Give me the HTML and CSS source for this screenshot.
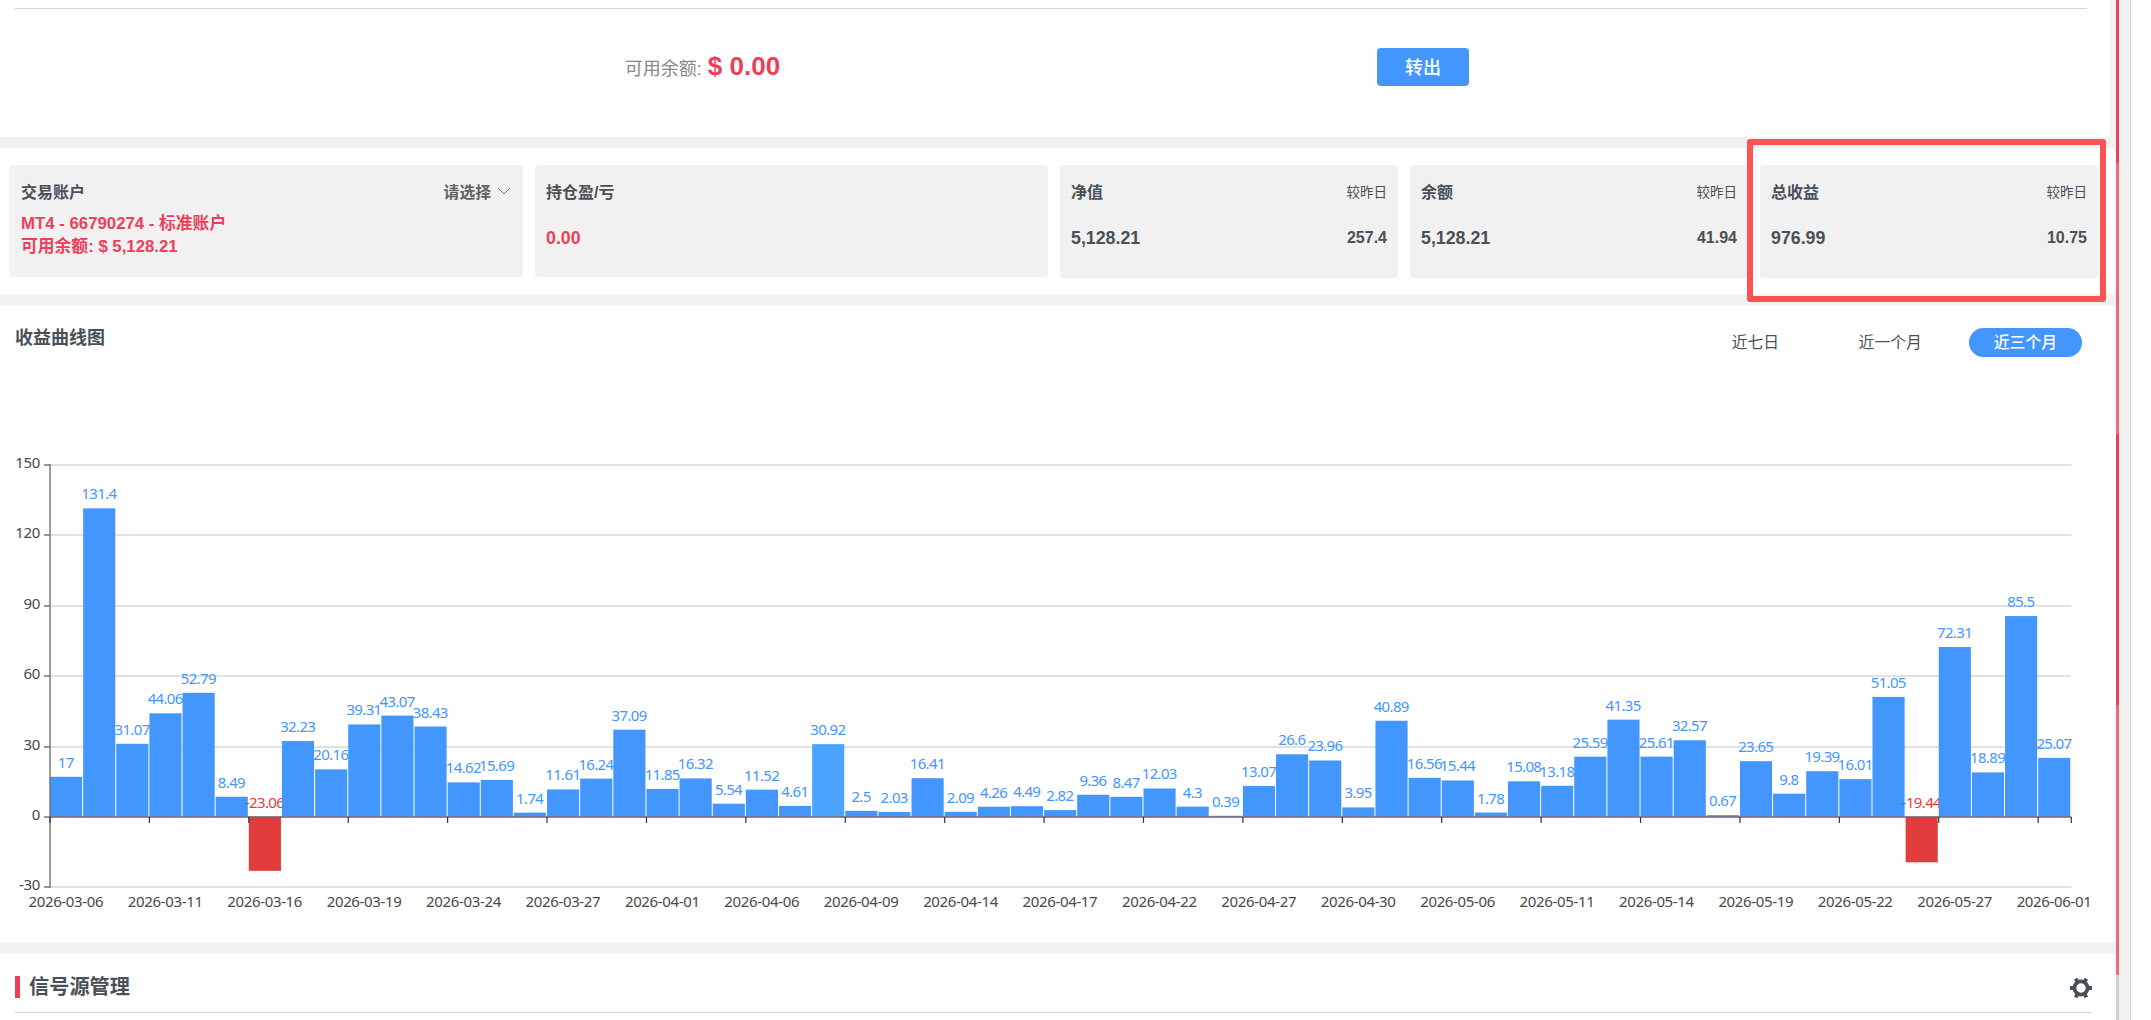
FILE: index.html
```html
<!DOCTYPE html>
<html lang="zh">
<head>
    <meta charset="UTF-8">
    <meta name="viewport" content="width=device-width, initial-scale=1.0">
    <title>收益曲线图</title>
    <link rel="stylesheet" href="styles.css">
</head>
<body>
    <div class="page">
        <main class="content">
            <section class="panel balance">
                <div class="balance-row">
                    <div class="balance-col">
                        <span class="balance-label">可用余额:</span>
                        <span class="balance-value">$ 0.00</span>
                    </div>
                    <div class="balance-col">
                        <button class="btn">转出</button>
                    </div>
                </div>
            </section>

            <section class="panel cards">
                <div class="card account">
                    <div class="card-head">
                        <h4>交易账户</h4>
                        <span class="select">请选择
                            <svg class="chevron" viewBox="0 0 14 8"><path d="M1 1l6 6 6-6"/></svg>
                        </span>
                    </div>
                    <p class="account-info">MT4 - 66790274 - 标准账户<br>可用余额: $ 5,128.21</p>
                </div>
                <div class="card position">
                    <div class="card-head"><h4>持仓盈/亏</h4></div>
                    <div class="card-body"><span class="value red">0.00</span></div>
                </div>
                <div class="card stat">
                    <div class="card-head"><h4>净值</h4><span class="compare">较昨日</span></div>
                    <div class="card-body"><span class="value">5,128.21</span><span class="diff">257.4</span></div>
                </div>
                <div class="card stat">
                    <div class="card-head"><h4>余额</h4><span class="compare">较昨日</span></div>
                    <div class="card-body"><span class="value">5,128.21</span><span class="diff">41.94</span></div>
                </div>
                <div class="card stat marked">
                    <div class="card-head"><h4>总收益</h4><span class="compare">较昨日</span></div>
                    <div class="card-body"><span class="value">976.99</span><span class="diff">10.75</span></div>
                </div>
            </section>

            <section class="panel profit">
                <div class="profit-head">
                    <h3>收益曲线图</h3>
                    <div class="tabs">
                        <span class="tab">近七日</span>
                        <span class="tab">近一个月</span>
                        <span class="tab active">近三个月</span>
                    </div>
                </div>
                <svg class="chart" id="chart" width="2116" height="500" viewBox="0 0 2116 500"></svg>
            </section>

            <section class="panel signal">
                <div class="signal-head">
                    <h2>信号源管理</h2>
                    <svg class="gear" viewBox="-11 -11 22 22">
                        <circle r="6.6"/>
                        <path d="M7 0H11M-7 0H-11M3.5 6.1L5.4 9.4M-3.5 6.1L-5.4 9.4M3.5-6.1L5.4-9.4M-3.5-6.1L-5.4-9.4"/>
                    </svg>
                </div>
            </section>
        </main>

        <div class="rail">
            <i class="deep"></i>
            <i class="light"></i>
            <i class="deep"></i>
            <i class="light"></i>
        </div>
        <div class="gutter"></div>
    </div>

    <script>
        const values = [
            17, 131.4, 31.07, 44.06, 52.79, 8.49, -23.06, 32.23, 20.16, 39.31,
            43.07, 38.43, 14.62, 15.69, 1.74, 11.61, 16.24, 37.09, 11.85, 16.32,
            5.54, 11.52, 4.61, 30.92, 2.5, 2.03, 16.41, 2.09, 4.26, 4.49,
            2.82, 9.36, 8.47, 12.03, 4.3, 0.39, 13.07, 26.6, 23.96, 3.95,
            40.89, 16.56, 15.44, 1.78, 15.08, 13.18, 25.59, 41.35, 25.61, 32.57,
            0.67, 23.65, 9.8, 19.39, 16.01, 51.05, -19.44, 72.31, 18.89, 85.5, 25.07
        ];
        // 每三根柱子显示一个日期
        const dates = [
            '2026-03-06', '2026-03-11', '2026-03-16', '2026-03-19', '2026-03-24', '2026-03-27', '2026-04-01',
            '2026-04-06', '2026-04-09', '2026-04-14', '2026-04-17', '2026-04-22', '2026-04-27', '2026-04-30',
            '2026-05-06', '2026-05-11', '2026-05-14', '2026-05-19', '2026-05-22', '2026-05-27', '2026-06-01'
        ];
        const hoverIndex = 23;
        const left = 50, right = 2071.3, zero = 377, unit = 70.4 / 30;
        const step = (right - left) / values.length;
        let svg = '';

        // 网格线和 Y 轴
        for (let v = 150; v >= -30; v -= 30) {
            const y = Math.round(zero - v * unit);
            svg += `<line class="grid" x1="${left}" x2="${right}" y1="${y}" y2="${y}"/>`;
            svg += `<line class="axis" x1="44" x2="${left}" y1="${y}" y2="${y}"/>`;
            svg += `<text class="axis-text" x="40" y="${y + 3.3}" text-anchor="end">${v}</text>`;
        }

        // 柱子
        values.forEach((v, i) => {
            const x = left + i * step;
            const top = zero - Math.max(v, 0) * unit;
            const cls = v < 0 ? 'neg' : i === hoverIndex ? 'hover' : '';
            svg += `<rect class="bar ${cls}" x="${x}" y="${top - 0.3}" width="${step - 1}" height="${Math.abs(v) * unit}"/>`;
            svg += `<text class="bar-text ${cls}" x="${x + step / 2 - 0.8}" y="${top - 9.3}" text-anchor="middle">${v}</text>`;
        });

        // X 轴
        svg += `<line class="axis" x1="${left}" x2="${right}" y1="${zero}" y2="${zero}"/>`;
        svg += `<line class="axis y" x1="${left}" x2="${left}" y1="24" y2="448"/>`;
        dates.forEach((d, i) => {
            const x = left + i * 3 * step;
            svg += `<line class="tick" x1="${x}" x2="${x}" y1="${zero}" y2="${zero + 6}"/>`;
            svg += `<text class="axis-text date" x="${x + step / 2 - 0.7}" y="467" text-anchor="middle">${d}</text>`;
        });
        svg += `<line class="tick" x1="${right}" x2="${right}" y1="${zero}" y2="${zero + 6}"/>`;

        document.getElementById('chart').innerHTML = svg;
    </script>
</body>
</html>
```

FILE: styles.css
```css
*,
*::after {
    box-sizing: border-box;
    margin: 0;
    padding: 0;
}

body {
    font-family: "Liberation Sans", "Noto Sans CJK SC", sans-serif;
    color: #485058;
    background: #fff;
    overflow: hidden;
}

.page {
    display: flex;
    height: 1020px;
}

.content {
    width: 2116px;
    display: flex;
    flex-direction: column;
    background: #f1f1f1;
}

.panel {
    background: #fff;
}

/* 可用余额 */
.balance {
    width: 2110px;
    height: 137px;
    margin-bottom: 11px;
    padding: 8px 23px 0 15px;
}

.balance-row {
    display: flex;
    height: 116px;
    border-top: 1px solid #d6d6d6;
}

.balance-col {
    flex: 1;
    display: flex;
    align-items: center;
    margin-left: -13px;
}

.balance-col:first-child {
    flex: 0 0 1375px;
    justify-content: center;
    gap: 6px;
    margin-left: 0;
}

.balance-label {
    font-size: 18px;
    color: #888;
}

.balance-value {
    font-size: 26px;
    font-weight: bold;
    color: #ee3f5a;
}

.btn {
    width: 92px;
    height: 38px;
    padding-bottom: 1px;
    border: none;
    border-radius: 4px;
    background: #4496ff;
    color: #fff;
    font: 500 18px "Liberation Sans", "Noto Sans CJK SC", sans-serif;
}

/* 账户卡片 */
.cards {
    display: flex;
    gap: 12px;
    height: 146px;
    margin-bottom: 12px;
    padding: 17px 17px 16px 9px;
    border-radius: 0 6px 6px 0;
}

.card {
    width: 514px;
    height: 112px;
    padding: 14px 12px;
    border-radius: 4px;
    background: #f1f1f1;
}

.card.position {
    width: 513px;
    padding: 14px 11px;
}

.card.stat {
    width: 338px;
    height: 113px;
    padding: 14px 11px;
}

.card-head,
.card-body {
    display: flex;
    justify-content: space-between;
    align-items: center;
    height: 24px;
}

.card-body {
    margin-top: 23px;
}

.card h4 {
    font-size: 16px;
}

.select {
    display: flex;
    align-items: center;
    gap: 6px;
    font-size: 15.8px;
    font-weight: bold;
    color: #606266;
}

.chevron {
    width: 14px;
    height: 8px;
    fill: none;
    stroke: #707276;
}

.account-info {
    margin-top: 9px;
    font-size: 16.8px;
    font-weight: bold;
    line-height: 23px;
    color: #ee3f5a;
}

.value {
    font-size: 17.8px;
    font-weight: bold;
}

.red {
    color: #ee3f5a;
}

.compare {
    font-size: 13.5px;
}

.diff {
    font-size: 16px;
    font-weight: bold;
}

/* 红框标注 */
.marked {
    position: relative;
}

.marked::after {
    content: "";
    position: absolute;
    left: -13px;
    top: -26px;
    width: 359px;
    height: 163px;
    border: 6px solid #ff5252;
    border-radius: 3px;
}

/* 收益曲线图 */
.profit {
    height: 636px;
    margin-bottom: 12px;
}

.profit-head {
    display: flex;
    justify-content: space-between;
    height: 134px;
    padding: 19px 34px 0 15px;
}

.profit-head h3 {
    font-size: 18px;
    line-height: 26px;
}

.tabs {
    display: flex;
    margin-top: 3px;
    height: 29px;
}

.tab {
    padding: 0 25px;
    margin-left: 29.5px;
    border-radius: 15px;
    font-size: 15.8px;
    line-height: 29px;
}

.tab.active {
    margin-left: 22px;
    background: #4496ff;
    color: #fff;
    font-weight: 500;
}

.chart {
    display: block;
}

.chart text {
    font-family: "Noto Sans", sans-serif;
    font-size: 15px;
}

.grid {
    stroke: #e2e2e2;
    stroke-width: 2;
}

.axis {
    stroke: #6b6e72;
    stroke-width: 1.4;
}

.tick {
    stroke: #333;
    stroke-width: 1.2;
}

.axis-text {
    fill: #484848;
    letter-spacing: -0.35px;
}

.bar {
    fill: #4496ff;
}

.bar.hover {
    fill: #4ba5ff;
}

.bar.neg {
    fill: #e33c3c;
}

.bar-text {
    fill: #4496ff;
    letter-spacing: -0.65px;
}

.bar-text.neg {
    fill: #e33c3c;
}

/* 信号源管理 */
.signal {
    flex: 1;
    padding: 0 23px 0 15px;
}

.signal-head {
    display: flex;
    justify-content: space-between;
    align-items: center;
    height: 59px;
    padding: 8px 1px 0 0;
    border-bottom: 1px solid #d6d6d6;
}

.signal-head h2 {
    padding-left: 9px;
    border-left: 5px solid #ee3f5a;
    font-size: 20.2px;
    line-height: 22px;
}

.gear {
    width: 22px;
    height: 22px;
    margin-top: 2px;
    fill: none;
    stroke: #485058;
    stroke-width: 3.8;
}

/* 右侧滚动条 */
.rail {
    width: 3px;
    display: flex;
    flex-direction: column;
    background: #d0d0d0;
}

.rail i {
    height: 271px;
}

.rail i:first-child {
    height: 163px;
}

.rail i:last-child {
    height: 270px;
}

.deep {
    background: #ef405b;
}

.light {
    background: #f1687f;
}

.gutter {
    width: 12px;
    background: #f1f1f1;
    border-right: 1px solid #d6d6d6;
}
```
